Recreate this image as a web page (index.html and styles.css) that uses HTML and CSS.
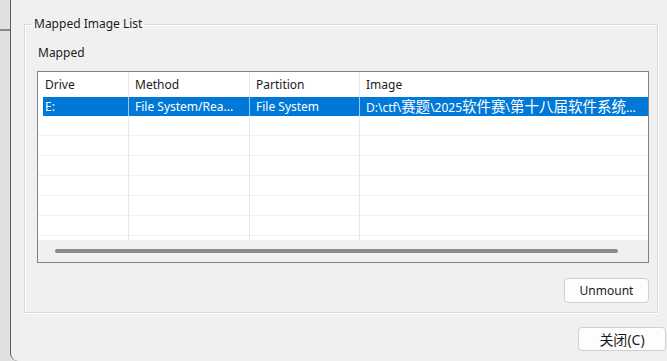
FILE: index.html
```html
<!DOCTYPE html>
<html lang="zh-CN">
<head>
    <meta charset="UTF-8">
    <meta name="viewport" content="width=device-width, initial-scale=1.0">
    <title>Mapped Image List</title>

    <link rel="stylesheet" href="styles.css">
</head>
<body>
    <div class="backdrop">
        <div class="backdrop-line"></div>
    </div>
    <main class="window">
        <fieldset class="group">
            <legend>Mapped Image List</legend>
            <div class="label">Mapped</div>

            <div class="list">
                <div class="grid">
                    <table>
                        <colgroup>
                            <col class="c-drive">
                            <col class="c-method">
                            <col class="c-part">
                            <col>
                        </colgroup>
                        <thead>
                            <tr>
                                <th class="first">Drive</th>
                                <th>Method</th>
                                <th>Partition</th>
                                <th>Image</th>
                            </tr>
                        </thead>
                        <tbody>
                            <tr class="sel">
                                <td class="first">E:</td>
                                <td>File System/Rea...</td>
                                <td>File System</td>
                                <td>D:\ctf\<span class="cjk">赛题</span>\2025<span class="cjk">软件赛</span>\<span class="cjk">第十八届软件系统</span>...</td>
                            </tr>
                            <tr><td></td><td></td><td></td><td></td></tr>
                            <tr><td></td><td></td><td></td><td></td></tr>
                            <tr><td></td><td></td><td></td><td></td></tr>
                            <tr><td></td><td></td><td></td><td></td></tr>
                            <tr><td></td><td></td><td></td><td></td></tr>
                            <tr><td></td><td></td><td></td><td></td></tr>
                            <tr><td></td><td></td><td></td><td></td></tr>
                        </tbody>
                    </table>
                </div>
                <div class="hscroll">
                    <div class="thumb"></div>
                </div>
            </div>

            <div class="actions">
                <button class="btn unmount">Unmount</button>
            </div>
        </fieldset>

        <div class="footer">
            <button class="btn close"><span class="cjk">关闭</span>(C)</button>
        </div>
    </main>
</body>
</html>
```

FILE: styles.css
```css
* {
    box-sizing: border-box;
}

body {
    display: flex;
    margin: 0;
    height: 361px;
    overflow: hidden;
    background-color: #e2e2e2;
    color: #1b1b1b;
    font-family: "Noto Sans", "Noto Sans CJK SC", sans-serif;
    font-size: 12px;
}

.cjk {
    font-family: "Noto Sans CJK SC", sans-serif;
    font-size: 14.5px;
}

.backdrop {
    width: 10px;
    background-color: #e0e0e0;
}

.backdrop-line {
    margin-top: 29px;
    height: 2px;
    background-color: #8a8a8a;
}

.window {
    flex: 1;
    display: flex;
    flex-direction: column;
    padding: 16px 1px 0 13px;
    background-color: #f0f0f0;
    border-left: 1px solid #5c5c5c;
    border-bottom-left-radius: 8px;
}

.group {
    margin: 0 8px 0 0;
    padding: 13px 8px 9px 12px;
    border: 1px solid #d9d9d9;
    box-shadow: inset 1px 1px 0 #fff, 1px 1px 0 #fff;
    min-width: 0;
}

.group legend {
    margin-left: -5px;
    padding: 0 2px;
    line-height: 16px;
}

.label {
    margin: 0 0 10px 1px;
    line-height: 16px;
}

.list {
    height: 192px;
    border: 1px solid #828282;
    background-color: #fff;
    display: flex;
    flex-direction: column;
}

.grid {
    height: 168px;
    overflow: hidden;
}

table {
    width: 100%;
    table-layout: fixed;
    border-collapse: separate;
    border-spacing: 0;
}

.c-drive {
    width: 91px;
}

.c-method {
    width: 121px;
}

.c-part {
    width: 110px;
}

th, td {
    padding: 0 6px;
    text-align: left;
    font-weight: normal;
    white-space: nowrap;
    line-height: 16px;
    border-right: 1px solid #e8e8e8;
}

th:last-child, td:last-child {
    border-right: none;
}

th {
    height: 25px;
}

th.first {
    padding-left: 7px;
}

td {
    height: 20px;
    border-bottom: 1px solid #f0f0f0;
}

tr.sel td {
    height: 19px;
    color: #fff;
    background-color: #0078d7;
    border-bottom: none;
    border-right-color: #9cc7ee;
}

tr.sel td.first {
    padding-left: 7px;
    background: linear-gradient(to right, #fff 5px, #0078d7 5px);
}

.hscroll {
    flex: 1;
    display: flex;
    align-items: center;
    padding: 0 30px 0 17px;
    background-color: #f0f0f0;
}

.thumb {
    flex: 1;
    height: 4px;
    border-radius: 2px;
    background-color: #8a8a8a;
}

.actions {
    display: flex;
    justify-content: flex-end;
    margin-top: 15px;
}

.btn {
    font-family: inherit;
    font-size: 12px;
    color: #1b1b1b;
    background-color: #fdfdfd;
    border: 1px solid #d0d0d0;
    border-radius: 4px;
    padding: 0;
}

.unmount {
    width: 85px;
    height: 25px;
}

.footer {
    display: flex;
    justify-content: flex-end;
    margin-top: 14px;
}

.close {
    width: 88px;
    height: 24px;
    font-size: 14px;
}

.close .cjk {
    font-size: 14px;
}
```
